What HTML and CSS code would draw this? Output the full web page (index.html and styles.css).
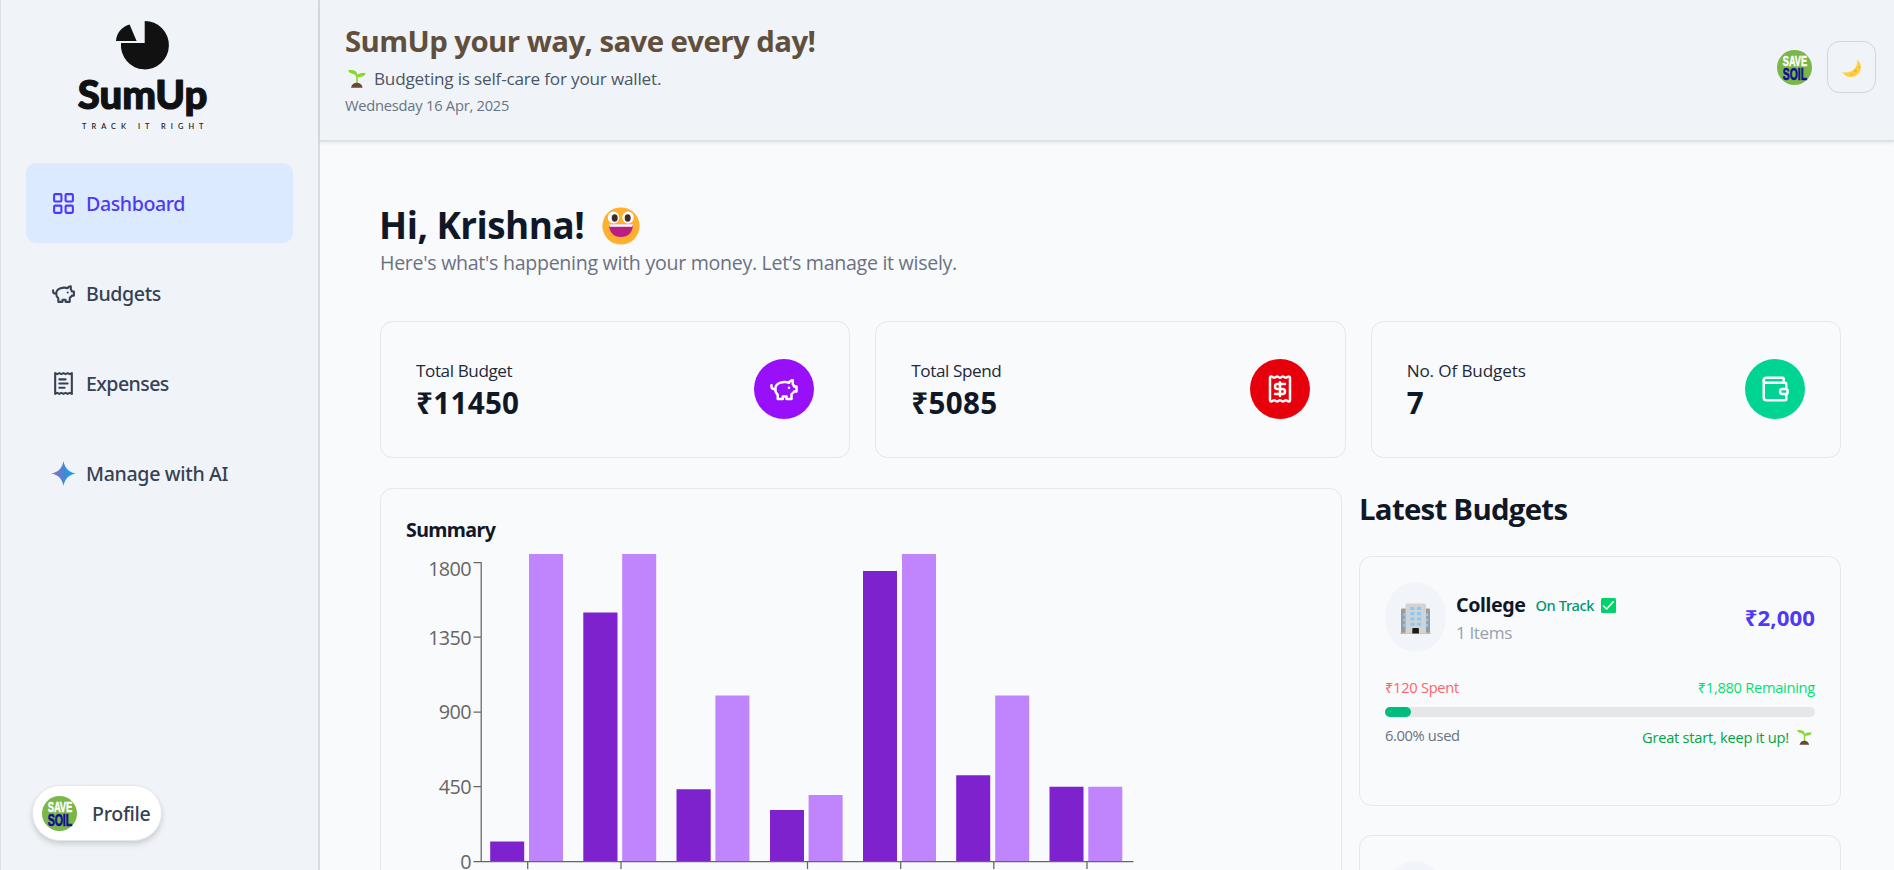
FILE: index.html
```
<!DOCTYPE html>
<html lang="en">
<head>
<meta charset="utf-8">
<title>SumUp</title>
<link rel="stylesheet" href="styles.css">
</head>
<body>
<svg class="defs" width="0" height="0">
  <defs>
    <linearGradient id="spark" x1="0" y1="0" x2="1" y2="0">
      <stop offset="0.1" stop-color="#8c6cc4"/><stop offset="0.5" stop-color="#4a86d2"/><stop offset="0.85" stop-color="#139fe6"/>
    </linearGradient>
    <symbol id="piggy" viewBox="0 0 24 24">
      <path d="M19 5c-1.5 0-2.8 1.4-3 2-3.5-1.5-11-.3-11 5 0 1.8 0 3 2 4.5V20h4v-2h3v2h4v-4c1-.5 1.7-1 2-2h2v-4h-2c0-1-.5-1.5-1-2V5z"/><path d="M2 9v1c0 1.1.9 2 2 2h1"/><path d="M16 11h.01"/>
    </symbol>
    <symbol id="soil" viewBox="0 0 35 35">
      <circle cx="17.5" cy="17.5" r="17.5" fill="#7ab648"/>
      <text x="5.8" y="15.9" font-size="14.8" textLength="24.2" lengthAdjust="spacingAndGlyphs" fill="#fff" stroke="#fff" stroke-width=".5">SAVE</text>
      <text x="5.8" y="29.5" font-size="17" textLength="24.2" lengthAdjust="spacingAndGlyphs" fill="#100c96" stroke="#100c96" stroke-width=".6">SOIL</text>
    </symbol>
    <symbol id="sprout" viewBox="0 0 18 18">
      <path d="M8.2 15V7.2C8 4.600 5.500 3.800 3.500 3.400 1.500 3 .6 1.600 .1.300 5 -.3 8.700.5 9.300 4.600 10.800 3 14 2.700 17.800 3 17.300 5.500 14.500 7.300 9.800 7V15z" fill="#86d72f"/>
      <path d="M3 17.700C3.500 14.700 6 12.800 8.800 12.800s5.300 1.900 5.800 4.900z" fill="#6d4534"/>
    </symbol>
  </defs>
</svg>
<div class="app">
  <aside class="sidebar">
    <svg class="logo" width="140" height="114" viewBox="74 18 140 114">
      <path d="M144.700 21A24 24.200 0 1 1 121 43H144.700z" fill="#111"/>
      <path d="M136.600 41H116C116.300 33.500 121.500 27 129.600 24.600z" fill="#111"/>
      <text class="logo-name" x="77.800" y="109.200" textLength="129.500" lengthAdjust="spacingAndGlyphs">SumUp</text>
      <text class="logo-tag" x="82" y="129" textLength="121.500">TRACK IT RIGHT</text>
    </svg>
    <nav class="nav">
      <a class="nav-item active">
        <svg class="icon" viewBox="0 0 24 24"><rect width="7" height="7" x="3" y="3" rx="1"/><rect width="7" height="7" x="14" y="3" rx="1"/><rect width="7" height="7" x="14" y="14" rx="1"/><rect width="7" height="7" x="3" y="14" rx="1"/></svg>
        <span class="t-dash">Dashboard</span>
      </a>
      <a class="nav-item">
        <svg class="icon"><use href="#piggy"/></svg>
        <span class="t-dash">Budgets</span>
      </a>
      <a class="nav-item">
        <svg class="icon" viewBox="0 0 24 24"><path d="M4 2v20l2-1 2 1 2-1 2 1 2-1 2 1 2-1 2 1V2l-2 1-2-1-2 1-2-1-2 1-2-1-2 1Z"/><path d="M14 8H8"/><path d="M16 12H8"/><path d="M13 16H8"/></svg>
        <span class="t-nav">Expenses</span>
      </a>
      <a class="nav-item">
        <svg class="icon spark" viewBox="0 0 24 24"><path d="M12 0C13.200 7 17 10.800 24 12 17 13.200 13.200 17 12 24 10.800 17 7 13.200 0 12 7 10.800 10.800 7 12 0z"/></svg>
        <span class="t-ai">Manage with AI</span>
      </a>
    </nav>
    <div class="profile">
      <svg class="avatar"><use href="#soil"/></svg>
      <span>Profile</span>
    </div>
  </aside>

  <div class="main">
    <header class="header">
      <div>
        <h1 class="title">SumUp your way, save every day!</h1>
        <p class="tagline"><svg class="sprout-lg"><use href="#sprout"/></svg><span>Budgeting is self-care for your wallet.</span></p>
        <p class="date">Wednesday 16 Apr, 2025</p>
      </div>
      <div class="header-actions">
        <svg class="avatar"><use href="#soil"/></svg>
        <button class="theme-btn">
          <svg width="20" height="19" viewBox="0 0 20 19"><path d="M15.300.6C19.800 4.500 20.200 11 16 15 11.500 19.500 3.500 19 .3 13.200 6 14 10.500 12.600 13 9.200 15 6.500 15.400 3.600 15.300.6z" fill="#ffcf3d"/><circle cx="13.500" cy="12" r="1.500" fill="#f4b52b"/><circle cx="17" cy="8" r="1" fill="#f4b52b"/><circle cx="9" cy="15.500" r="1.100" fill="#f4b52b"/></svg>
        </button>
      </div>
    </header>

    <main class="content">
      <h2 class="greeting"><span>Hi, Krishna!</span>
        <svg width="38" height="38" viewBox="0 0 38 38"><circle cx="19" cy="19" r="18.600" fill="#ffb02e"/><ellipse cx="11.500" cy="10.500" rx="5.700" ry="6" fill="#fff"/><ellipse cx="26" cy="10.500" rx="5.700" ry="6" fill="#fff"/><ellipse cx="12.700" cy="11" rx="3" ry="3.700" fill="#402a32"/><ellipse cx="25.700" cy="11" rx="3" ry="3.700" fill="#402a32"/><path d="M7 17.500H31C31 25.500 26 30 19 30S7 25.500 7 17.500z" fill="#bb1d80"/><path d="M7 17.300H31L30.300 19.800H7.700z" fill="#fff"/></svg>
      </h2>
      <p class="intro">Here's what's happening with your money. Let’s manage it wisely.</p>

      <section class="stats">
        <div class="card stat">
          <div><p class="stat-label l1">Total Budget</p><p class="stat-value">₹11450</p></div>
          <div class="bubble purple"><svg><use href="#piggy"/></svg></div>
        </div>
        <div class="card stat">
          <div><p class="stat-label l1">Total Spend</p><p class="stat-value">₹5085</p></div>
          <div class="bubble red"><svg viewBox="0 0 24 24"><path d="M4 3a1 1 0 0 1 1-1 1.300 1.300 0 0 1 .7.2l.933.6a1.300 1.300 0 0 0 1.400 0l.934-.6a1.300 1.300 0 0 1 1.400 0l.933.6a1.300 1.300 0 0 0 1.400 0l.933-.6a1.300 1.300 0 0 1 1.400 0l.934.6a1.300 1.300 0 0 0 1.400 0l.933-.6A1.300 1.300 0 0 1 19 2a1 1 0 0 1 1 1v18a1 1 0 0 1-1 1 1.300 1.300 0 0 1-.7-.2l-.933-.6a1.300 1.300 0 0 0-1.400 0l-.934.6a1.300 1.300 0 0 1-1.400 0l-.933-.6a1.300 1.300 0 0 0-1.400 0l-.933.6a1.300 1.300 0 0 1-1.400 0l-.934-.6a1.300 1.300 0 0 0-1.400 0l-.933.6a1.300 1.300 0 0 1-.7.2 1 1 0 0 1-1-1z"/><path d="M16 8h-6a2 2 0 1 0 0 4h4a2 2 0 1 1 0 4H8"/><path d="M12 17.500v-11"/></svg></div>
        </div>
        <div class="card stat">
          <div><p class="stat-label">No. Of Budgets</p><p class="stat-value">7</p></div>
          <div class="bubble green"><svg viewBox="0 0 24 24"><path d="M19 7V4a1 1 0 0 0-1-1H5a2 2 0 0 0 0 4h15a1 1 0 0 1 1 1v4h-3a2 2 0 0 0 0 4h3a1 1 0 0 0 1-1v-2a1 1 0 0 0-1-1"/><path d="M3 5v14a2 2 0 0 0 2 2h15a1 1 0 0 0 1-1v-4"/></svg></div>
        </div>
      </section>

      <section class="panels">
        <div class="card chart-card">
          <h3 class="chart-title">Summary</h3>
          <svg class="chart" width="900" height="380" viewBox="406 544 900 380">
            <g stroke="#666" stroke-width="1.250" fill="none">
              <path d="M473.500 562.500H481.200V861.500M473.500 637.200H481M473.500 712H481M473.500 786.700H481M473.500 861.500H1133.500"/>
              <path d="M527.700 861.500v7.500M621 861.500v7.500M807.500 861.500v7.500M900.700 861.500v7.500M993.800 861.500v7.500M1087 861.500v7.500"/>
            </g>
            <g fill="#7e22ce">
              <path d="M490.200 841.500h34V861h-34zM583.300 612.500h34.200V861h-34.200zM676.500 789.300h34.200V861h-34.200zM770 810h34V861h-34zM863 571h34V861h-34zM956.200 775.300h34V861h-34zM1049.500 786.700h34V861h-34z"/>
            </g>
            <g fill="#c084fc">
              <path d="M529 554h34V861h-34zM622.200 554h34V861h-34zM715.400 695.400h34V861h-34zM808.600 795h34V861h-34zM902 554h34V861h-34zM995.200 695.400h34V861h-34zM1088.300 786.700h34V861h-34z"/>
            </g>
            <g class="axis-text">
              <text x="471" y="576">1800</text>
              <text x="471" y="644.700">1350</text>
              <text x="471" y="718.700">900</text>
              <text x="471" y="793.600">450</text>
              <text x="471" y="868.600">0</text>
            </g>
          </svg>
        </div>

        <div class="latest">
          <h3 class="latest-title">Latest Budgets</h3>
          <article class="card budget">
            <div class="budget-head">
              <div class="budget-icon">
                <svg width="31" height="31" viewBox="0 0 31 31"><path d="M1 6.500Q1 5.500 2 5.500H29Q30 5.500 30 6.500V31H1z" fill="#9b9b9b"/><path d="M.5 29.500h30V31H.5z" fill="#bdbdbd"/><path d="M5.500 2Q5.500.5 7 .5H24.500Q26 .5 26 2V30.500H5.500z" fill="#d3d3d3"/><path d="M10.300 4h4.200v3h-4.200zM17 4h4.200v3H17zM10.300 9.200h4.200v3h-4.200zM17 9.200h4.200v3H17zM10.300 14.500h4.200v3h-4.200zM17 14.500h4.200v3H17zM10.300 19.700h4.200v3h-4.200zM17 19.700h4.200v3H17zM3.200 10.300h2.200v3H3.200zM3.200 15.500h2.200v3H3.200zM3.200 20.800h2.200v3H3.200zM26 10.300h2.200v3H26zM26 15.500h2.200v3H26zM26 20.800h2.200v3H26z" fill="#83cbff"/><path d="M12.300 26Q12.300 25 13.300 25h4.600Q18.900 25 18.900 26v4.500h-6.600z" fill="#1c1c1c"/></svg>
              </div>
              <div class="budget-info">
                <div class="budget-name"><span class="name">College</span><span class="status">On Track</span>
                  <svg width="15" height="15" viewBox="0 0 15 15"><rect width="15" height="15" rx="1.500" fill="#00d26a"/><path d="M2.500 8l3.200 3L12.200 3.800" fill="none" stroke="#fff" stroke-width="1.600" stroke-linecap="round" stroke-linejoin="round"/></svg>
                </div>
                <p class="items">1 Items</p>
              </div>
              <span class="amount">₹2,000</span>
            </div>
            <div class="row"><span class="spent">₹120 Spent</span><span class="remaining">₹1,880 Remaining</span></div>
            <div class="bar"><div class="fill" style="width:6%"></div></div>
            <div class="row foot"><span class="used">6.00% used</span><span class="cheer"><span>Great start, keep it up!</span><svg><use href="#sprout"/></svg></span></div>
          </article>
          <article class="card budget">
            <div class="budget-head"><div class="budget-icon"></div></div>
          </article>
        </div>
      </section>
    </main>
  </div>
</div>
</body>
</html>
```
FILE: styles.css
```
* { box-sizing: border-box; margin: 0; padding: 0; }
html, body { height: 870px; overflow: hidden; }
body { font-family: "Open Sans", "Noto Sans", sans-serif; font-size: 20px; background: #f9fafc; color: #101828; white-space: nowrap; }
.defs { display: block; position: absolute; }
.app { display: flex; height: 870px; overflow: hidden; }

.sidebar { width: 320px; flex: none; height: 870px; background: #f0f4f9; border-left: 1px solid #dfe1e6; border-right: 2px solid #dadbdf; display: flex; flex-direction: column; padding: 18px 25px 29px; }
.logo { margin-left: 48px; flex: none; overflow: visible; }
.logo-name { font: 900 40px Lato, sans-serif; fill: #111; stroke: #111; stroke-width: 1.2; stroke-linejoin: round; }
.logo-tag { font: 600 7.4px Lato, sans-serif; fill: #222; }
.nav { display: flex; flex-direction: column; gap: 10px; margin-top: 31px; }
.nav-item { display: flex; align-items: center; gap: 10px; height: 80px; width: 267px; padding-left: 25px; border-radius: 10px; color: #364153; font-family: "Noto Sans", sans-serif; font-size: 19.6px; font-weight: 500; }
.nav-item span { position: relative; top: 0.5px; }
.active { background: #dbeafe; color: #4f39f6; }
.icon { width: 25px; height: 25px; fill: none; stroke: currentColor; stroke-width: 2; stroke-linecap: round; stroke-linejoin: round; }
.spark { fill: url(#spark); stroke: none; }
.t-dash { letter-spacing: -0.4px; }
.t-nav { letter-spacing: -0.6px; }
.t-ai { letter-spacing: -0.34px; }
.profile { margin-top: auto; margin-left: 6px; display: flex; align-items: center; width: 130px; height: 56px; padding-left: 9px; gap: 15px; border: 1px solid #e5e7eb; border-radius: 28px; background: #fff; color: #364153; font-family: "Noto Sans", sans-serif; font-size: 19.6px; font-weight: 500; letter-spacing: -0.3px; box-shadow: 0 4px 6px rgba(0,0,0,.1), 0 2px 4px rgba(0,0,0,.07); }
.avatar { width: 35px; height: 35px; display: block; font-family: "Liberation Sans", sans-serif; font-weight: 700; }

.main { flex: 1; min-width: 0; }
.header { height: 142px; display: flex; justify-content: space-between; padding: 22.5px 18px 0 25px; background: #f0f4f9; border-bottom: 2px solid #e0e1e4; box-shadow: 0 1px 4px rgba(0,0,0,.08); }
.title { font-size: 29.4px; line-height: 37.5px; font-weight: 700; color: #5f4f3c; letter-spacing: -0.58px; }
.tagline { display: flex; align-items: center; gap: 8px; margin: 6px 0 3.5px 3px; font-size: 17.15px; line-height: 25px; color: #4a5565; letter-spacing: -0.2px; }
.sprout-lg { width: 18px; height: 18px; }
.date { font-size: 14.7px; line-height: 20px; color: #6a7282; letter-spacing: -0.24px; }
.header-actions { display: flex; align-items: center; gap: 15px; height: 52px; margin-top: 18.5px; }
.theme-btn { width: 49px; height: 52px; border: 1px solid #d1d5db; border-radius: 12.5px; background: transparent; display: flex; align-items: center; justify-content: center; padding-top: 3px; }

.content { padding: 60.5px 53px 0 60px; }
.greeting { display: flex; align-items: center; gap: 18px; font-size: 36.8px; line-height: 45px; font-weight: 700; letter-spacing: -0.5px; margin-left: -1px; }
.greeting svg { margin-top: 1px; }
.intro { margin-top: 2px; font-size: 19.6px; line-height: 25px; color: #6a7282; letter-spacing: -0.29px; }
.stats { display: grid; grid-template-columns: repeat(3, 1fr); gap: 25px; margin-top: 46.5px; }
.card { border: 1px solid #e5e7eb; border-radius: 12.5px; }
.stat { height: 137px; padding: 0 35px; display: flex; align-items: center; justify-content: space-between; }
.stat-label { font-size: 17.15px; line-height: 25px; color: #1e2939; letter-spacing: -0.14px; }
.l1 { letter-spacing: -0.42px; }
.stat-value { font-size: 29.6px; line-height: 37.5px; font-weight: 700; letter-spacing: 0.3px; padding-top: 1px; }
.bubble { width: 60px; height: 60px; margin-bottom: 1px; border-radius: 50%; display: flex; align-items: center; justify-content: center; }
.bubble svg { width: 30px; height: 30px; fill: none; stroke: #fff; stroke-width: 2; stroke-linecap: round; stroke-linejoin: round; }
.purple { background: #9810fa; }
.red { background: #e7000b; }
.green { background: #00d492; }

.panels { display: grid; grid-template-columns: 962px 482px; gap: 17px; margin-top: 30px; }
.chart-card { height: 460px; padding: 25px; }
.chart-title { padding-top: 1px; height: 30px; font-family: "Noto Sans", sans-serif; font-size: 19.6px; line-height: 30px; font-weight: 700; letter-spacing: -0.6px; }
.chart { display: block; }
.axis-text { font-size: 19.8px; fill: #666; text-anchor: end; letter-spacing: -0.6px; }
.latest-title { font-size: 29.4px; line-height: 37.5px; font-weight: 700; letter-spacing: -0.73px; margin-top: 2.5px; padding-bottom: 28px; }
.budget { height: 250px; padding: 25px; margin-bottom: 29px; }
.budget-head { display: flex; align-items: center; }
.budget-icon { width: 61px; height: 70px; border-radius: 50%; background: #f1f5f9; display: flex; align-items: center; justify-content: center; padding-top: 3px; }
.budget-info { margin: 1.5px 0 0 10px; }
.budget-name { display: flex; align-items: center; line-height: 30px; }
.name { font-family: "Noto Sans", sans-serif; font-size: 19.6px; font-weight: 700; letter-spacing: -0.4px; }
.status { margin-left: 10px; font-family: "Noto Sans", sans-serif; font-size: 14.7px; font-weight: 500; color: #059669; letter-spacing: -0.4px; }
.budget-name svg { margin-left: 7px; }
.items { font-size: 17.15px; line-height: 25px; color: #99a1af; letter-spacing: -0.4px; }
.amount { margin-left: auto; font-size: 22.2px; font-weight: 700; color: #4f39f6; letter-spacing: 0.1px; }
.row { display: flex; justify-content: space-between; font-size: 14.7px; line-height: 20px; margin-top: 25px; letter-spacing: -0.3px; }
.spent { color: #ff6467; }
.remaining { color: #05df72; }
.bar { height: 10px; margin-top: 10px; border-radius: 5px; background: #e5e7eb; }
.fill { height: 10px; border-radius: 5px; background: #00bc7d; }
.foot { margin-top: 8px; }
.used { color: #6a7282; letter-spacing: -0.36px; }
.cheer { display: flex; align-items: center; gap: 8px; margin: 2px 3px 0 0; color: #00a63e; letter-spacing: -0.25px; }
.cheer svg { width: 15px; height: 15px; }
```
